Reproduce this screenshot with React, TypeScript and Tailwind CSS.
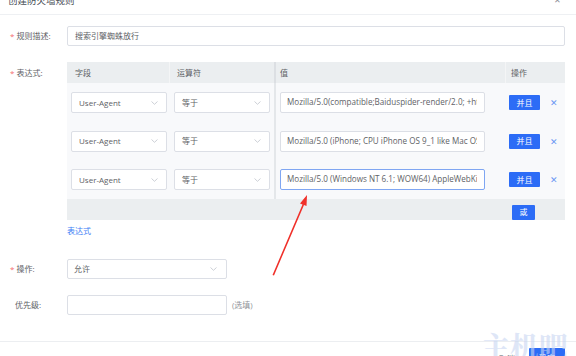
import React from "react";

const font = { fontFamily: '"Open Sans", "Noto Sans CJK SC", sans-serif' };

function Chevron() {
  return (
    <svg width="7" height="4" viewBox="0 0 7 4" className="shrink-0">
      <path d="M0.5 0.5 L3.5 3.3 L6.5 0.5" fill="none" stroke="#c0c4cc" strokeWidth="0.8" />
    </svg>
  );
}

function Select({ text, w }: { text: string; w: string }) {
  return (
    <div className={`${w} h-[21px] bg-white border border-[#dcdfe6] rounded-[2px] flex items-center justify-between pl-[7px] pr-[8px] text-[8px] text-[#606266]`}>
      <span>{text}</span>
      <Chevron />
    </div>
  );
}

function Row({ value, focused, h }: { value: string; focused?: boolean; h: string }) {
  return (
    <div className={`flex ${h} items-center`}>
      <div className="w-[103px] pl-[4px]">
        <Select text="User-Agent" w="w-[96px]" />
      </div>
      <div className="w-[104px] pl-[4px]">
        <Select text="等于" w="w-[96px]" />
      </div>
      <div className="w-[231px] pl-[4px] self-stretch flex items-center border-l-2 border-[#e4e7ea]">
        <div
          className={`w-[205px] h-[21px] bg-white rounded-[2px] flex items-center pl-[6px] pr-[7px] text-[8.1px] text-[#606266] border ${
            focused ? "border-[#7fa6f2]" : "border-[#dcdfe6]"
          }`}
        >
          <span className="block w-full whitespace-nowrap overflow-hidden">{value}</span>
        </div>
      </div>
      <div className="w-[60px] pl-[4px] flex items-center">
        <div className="w-[31px] h-[15px] bg-[#2c6cf6] rounded-[1px] text-white text-[8px] flex items-center justify-center">并且</div>
        <span className="ml-[10px] text-[#6b97f3] text-[9px] leading-none">✕</span>
      </div>
    </div>
  );
}

export default function App() {
  return (
    <div className="relative w-[576px] h-[356px] overflow-hidden bg-white" style={font}>
      {/* title */}
      <div className="h-[15px] border-b border-[#eef0f3] overflow-hidden relative">
        <div className="absolute left-[8px] top-[-5px] text-[9.5px] leading-[11px] text-[#4a4f57]">创建防火墙规则</div>
        <div className="absolute left-[554px] top-[-6px] text-[8px] text-[#909399]">✕</div>
      </div>

      {/* 规则描述 */}
      <div className="mt-[11px] flex items-center h-[20px]">
        <div className="w-[67px] pl-[10px] text-[8px] text-[#606266] flex items-center">
          <span className="text-[#f56c6c] mr-[2px]">*</span>规则描述:
        </div>
        <div className="w-[498px] h-[20px] border border-[#dcdfe6] rounded-[2px] flex items-center pl-[7px] text-[8px] text-[#606266]">
          搜索引擎蜘蛛放行
        </div>
      </div>

      {/* 表达式 */}
      <div className="mt-[16px] flex items-start">
        <div className="w-[67px] h-[21px] pl-[10px] text-[8px] text-[#606266] flex items-center">
          <span className="text-[#f56c6c] mr-[2px]">*</span>表达式:
        </div>
        <div className="w-[498px]">
          <div className="flex h-[21px] bg-[#ebeef0] text-[8px] text-[#606266]">
            <div className="w-[103px] pl-[8px] flex items-center border-r border-[#f4f5f6]">字段</div>
            <div className="w-[104px] pl-[7px] flex items-center">运算符</div>
            <div className="w-[231px] pl-[4px] flex items-center border-l-2 border-[#dcdfe3]">值</div>
            <div className="w-[60px] pl-[5px] flex items-center border-l border-[#f4f5f6]">操作</div>
          </div>
          <div className="bg-[#f8f9fb]">
            <Row h="h-[39px]" value="Mozilla/5.0(compatible;Baiduspider-render/2.0; +http://www.baidu.com/search/spider.html)" />
            <Row h="h-[38px]" value="Mozilla/5.0 (iPhone; CPU iPhone OS 9_1 like Mac OS X)" />
            <Row h="h-[39px]" focused value="Mozilla/5.0 (Windows NT 6.1; WOW64) AppleWebKit/537.36" />
          </div>
          <div className="h-[21px] bg-[#ebeef0] flex items-center justify-end pr-[30px]">
            <div className="w-[23px] h-[15px] mt-[5px] bg-[#2c6cf6] rounded-[1px] text-white text-[8px] flex items-center justify-center">或</div>
          </div>
        </div>
      </div>

      {/* link */}
      <div className="pl-[67px] mt-[4px] h-[13px] flex items-center text-[8px] text-[#3c7ef5]">表达式</div>

      {/* 操作 */}
      <div className="mt-[22px] flex items-center h-[20px]">
        <div className="w-[67px] pl-[10px] text-[8px] text-[#606266] flex items-center">
          <span className="text-[#f56c6c] mr-[2px]">*</span>操作:
        </div>
        <div className="w-[160px] h-[20px] border border-[#dcdfe6] rounded-[2px] flex items-center justify-between pl-[6px] pr-[9px] text-[8px] text-[#606266]">
          <span>允许</span>
          <Chevron />
        </div>
      </div>

      {/* 优先级 */}
      <div className="mt-[16px] flex items-center h-[20px]">
        <div className="w-[67px] pl-[15px] text-[8px] text-[#606266]">优先级:</div>
        <div className="w-[160px] h-[20px] border border-[#dcdfe6] rounded-[2px]"></div>
        <div className="ml-[5px] text-[8px] text-[#909399]">(选填)</div>
      </div>

      {/* footer */}
      <div className="mt-[26px] border-t border-[#eceef1] flex justify-end items-start pt-[6px] pr-[11px]">
        <div className="mt-[5px] text-[8px] text-[#606266]">取消</div>
        <div className="ml-[14px] w-[36px] h-[20px] bg-[#2c6cf6] rounded-[1px] text-white text-[8px] flex items-center justify-center">确定</div>
      </div>

      {/* watermark */}
      <div
        className="absolute left-[481px] top-[330px] text-[29px] leading-[32px] font-bold text-[#c9d6f2] opacity-60 pointer-events-none"
        style={{ fontFamily: '"Noto Serif CJK SC", "Noto Sans CJK SC", serif' }}
      >
        主机吧
      </div>

      {/* red arrow */}
      <svg className="absolute left-0 top-0 pointer-events-none" width="576" height="356">
        <polygon points="272.5,275 274,275.4 304,205 306.5,206 307,195 300,203.5 302.5,204.5" fill="#f0302a" />
      </svg>
    </div>
  );
}
